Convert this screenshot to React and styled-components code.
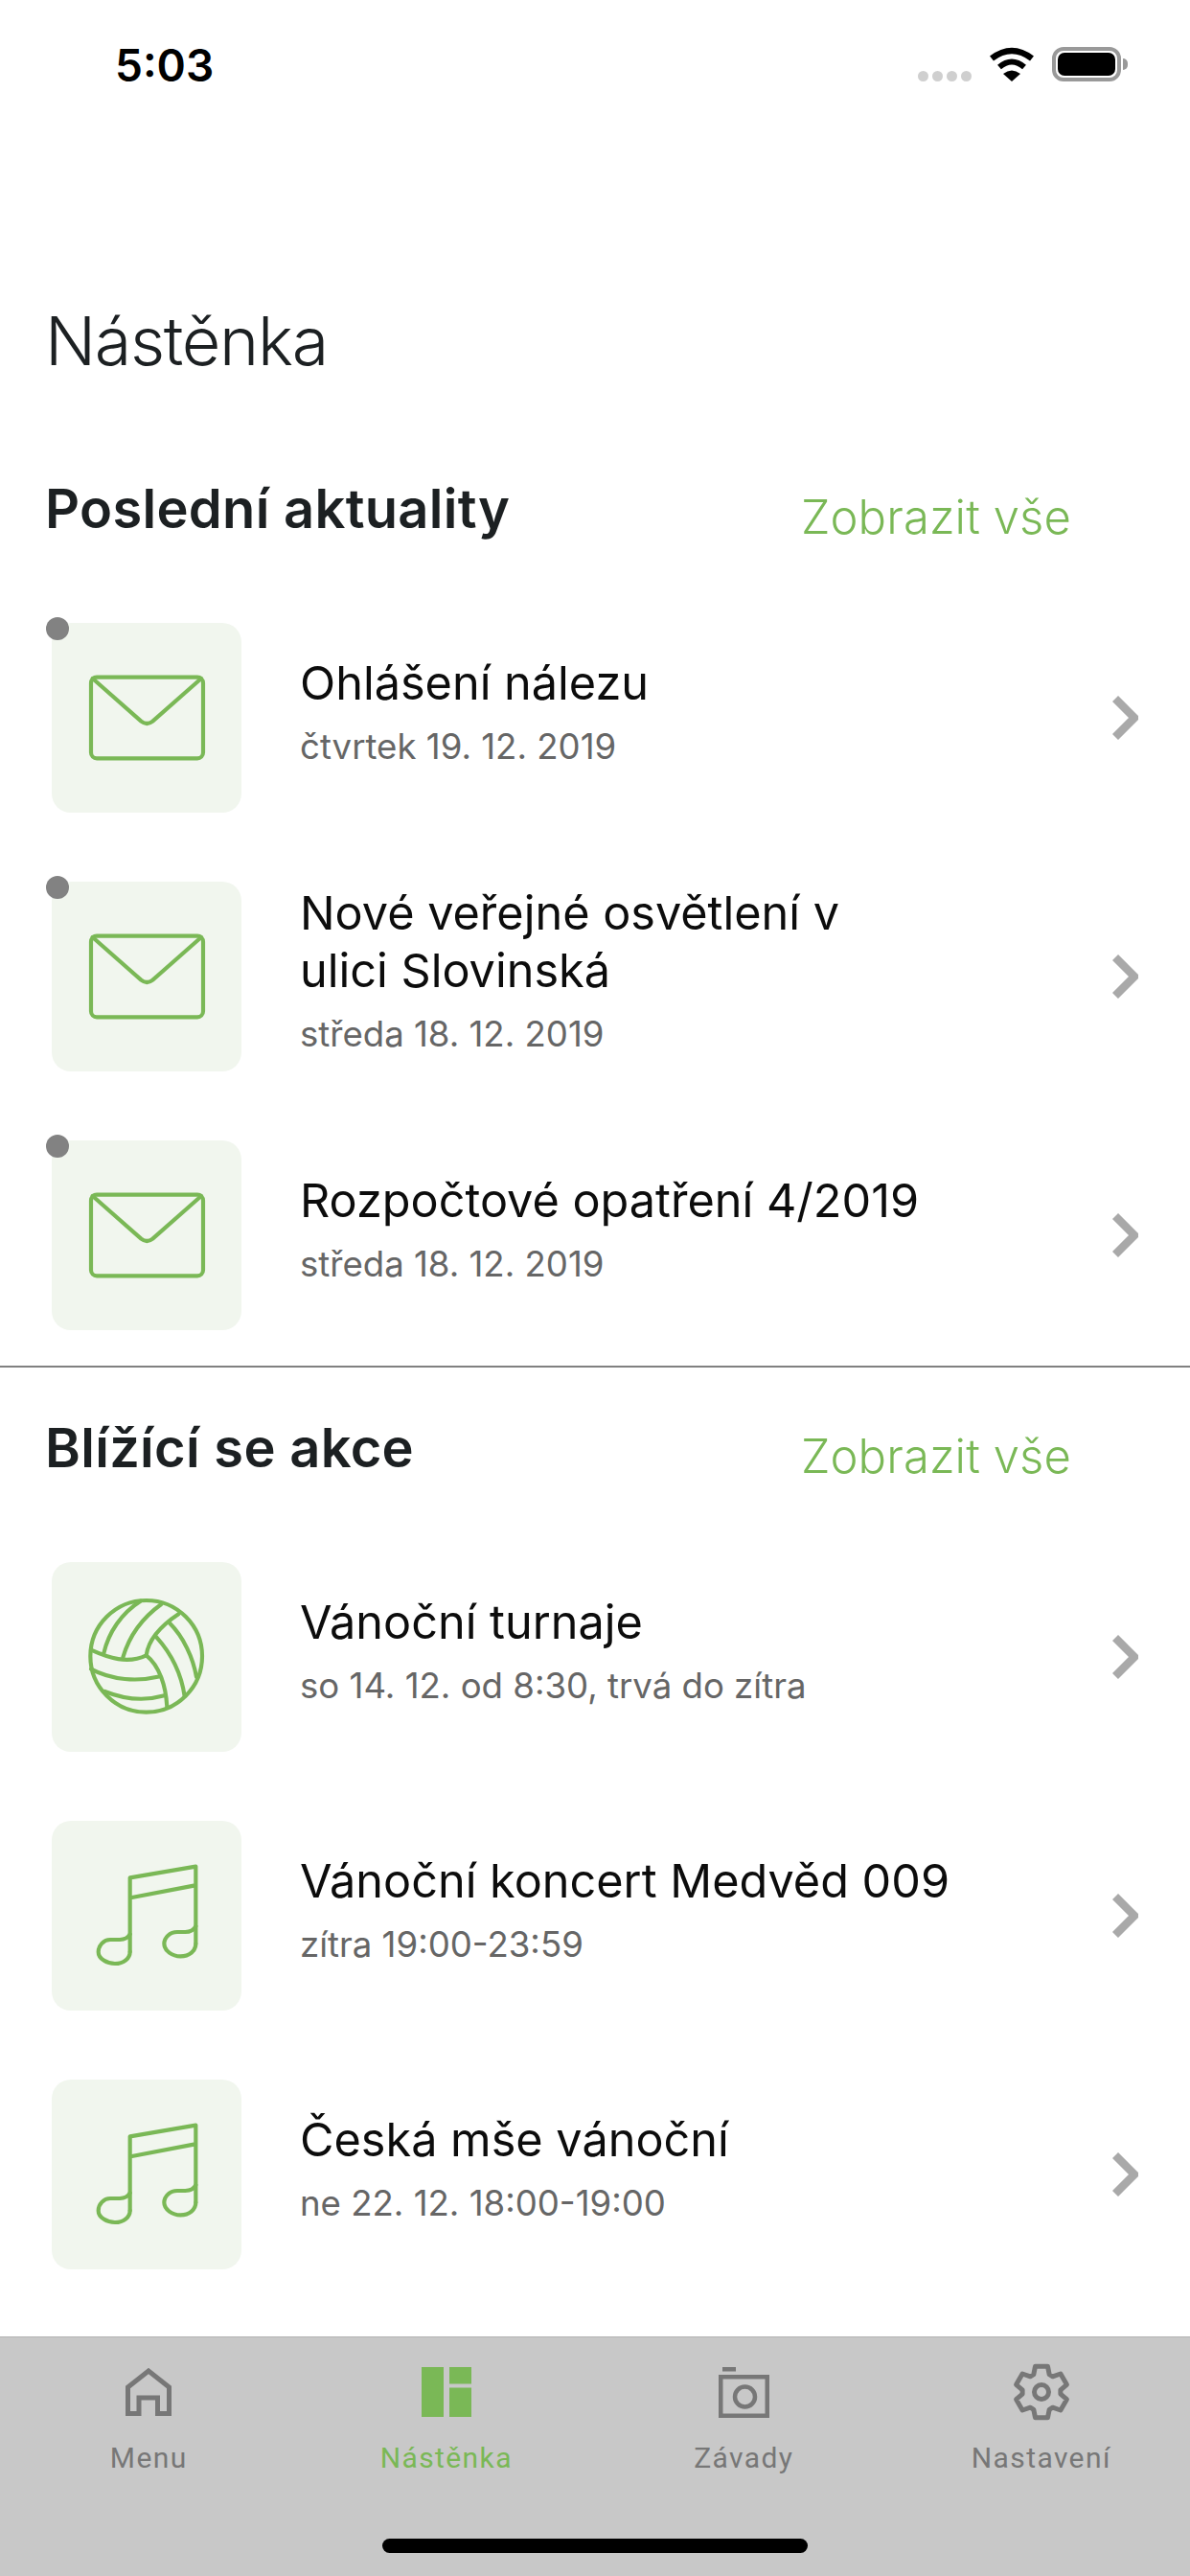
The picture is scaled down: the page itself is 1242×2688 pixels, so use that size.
import React from 'react';
import styled, { createGlobalStyle } from 'styled-components';

const GlobalStyle = createGlobalStyle`
    html, body {
        margin: 0;
        padding: 0;
        background: #fff;
    }
    * {
        box-sizing: border-box;
    }
`

const GREEN = '#7ab856'

const Page = styled.div`
    width: 1242px;
    height: 2688px;
    display: flex;
    flex-direction: column;
    font-family: Inter, "Liberation Sans", sans-serif;
    color: #1c2022;
    background: #fff;
    overflow: hidden;
`

const StatusBar = styled.div`
    height: 132px;
    padding: 49px 72px 0 120px;
    display: flex;
    justify-content: space-between;
    align-items: flex-start;
`

const Time = styled.div`
    font-size: 46px;
    line-height: 38px;
    font-weight: 600;
    color: #000;
`

const StatusIcons = styled.div`
    display: flex;
    align-items: flex-end;
    gap: 18px;
`

const SignalDots = styled.div`
    display: flex;
    gap: 4px;
`

const SignalDot = styled.span`
    width: 11px;
    height: 11px;
    border-radius: 50%;
    background: #cfcfcf;
`

const Battery = styled.div`
    position: relative;
    width: 72px;
    height: 36px;
    padding: 2px;
    border: 4px solid #999;
    border-radius: 12px;
    &::after {
        content: "";
        position: absolute;
        right: -11px;
        top: 8px;
        width: 5px;
        height: 12px;
        border-radius: 0 5px 5px 0;
        background: #999;
    }
`

const BatteryFill = styled.div`
    height: 100%;
    border-radius: 7px;
    background: #000;
`

const PageTitle = styled.h1`
    margin: 0;
    padding: 182px 0 0 47px;
    font-size: 70px;
    line-height: 84px;
    font-weight: 350;
    letter-spacing: -1.3px;
`

const Section = styled.section`
    padding: ${props => props.$first ? '98px 0 37px' : '49px 0 0'};
    border-top: ${props => props.$first ? 'none' : '2px solid #808080'};
`

const SectionHeader = styled.div`
    display: flex;
    justify-content: space-between;
    align-items: center;
    height: 70px;
    padding: 0 124px 0 47px;
`

const SectionTitle = styled.h2`
    margin: 0;
    font-size: 56px;
    line-height: 70px;
    font-weight: 600;
    letter-spacing: 0.3px;
`

const ShowAll = styled.a`
    position: relative;
    top: 9px;
    font-size: 49px;
    line-height: 60px;
    font-weight: 350;
    letter-spacing: 0.1px;
    color: ${GREEN};
`

const List = styled.div`
    margin-top: 84px;
    display: flex;
    flex-direction: column;
    gap: 72px;
`

const Row = styled.div`
    height: 198px;
    padding: 0 54px 0 54px;
    display: flex;
    align-items: center;
`

const Tile = styled.div`
    position: relative;
    flex: none;
    width: 198px;
    height: 198px;
    border-radius: 20px;
    background: #f1f6ee;
    svg {
        display: block;
    }
`

const UnreadDot = styled.span`
    position: absolute;
    left: -6px;
    top: -6px;
    width: 24px;
    height: 24px;
    border-radius: 50%;
    background: #828282;
`

const RowText = styled.div`
    flex: 1;
    margin-left: 61px;
    margin-top: -6px;
`

const RowTitle = styled.div`
    font-size: 48.6px;
    line-height: 60px;
    font-weight: 400;
    color: #0c0c0c;
`

const RowDate = styled.div`
    margin-top: 6px;
    font-size: 36.6px;
    line-height: 60px;
    font-weight: 400;
    color: #666;
`

const TabBar = styled.nav`
    flex: none;
    margin-top: auto;
    height: 250px;
    padding-top: 27px;
    display: flex;
    flex-direction: column;
    background: #c8c8c8;
    border-top: 1px solid #b2b2b2;
`

const Tabs = styled.div`
    display: grid;
    grid-template-columns: repeat(4, 1fr);
`

const Tab = styled.div`
    display: flex;
    flex-direction: column;
    align-items: center;
    color: ${props => props.$active ? GREEN : '#777'};
`

const TabIcon = styled.div`
    height: 60px;
    display: flex;
    align-items: center;
    justify-content: center;
`

const TabLabel = styled.div`
    margin-top: 20px;
    font-family: Roboto, Inter, sans-serif;
    font-size: 30px;
    line-height: 38px;
    letter-spacing: 1.4px;
`

const HomeIndicator = styled.div`
    width: 444px;
    height: 15px;
    margin: auto auto 24px;
    border-radius: 8px;
    background: #000;
`

const WifiIcon = () => (
    <svg width="48" height="36" viewBox="0 0 48 36">
        <path d="M3 12 Q24 -4 45 12" fill="none" stroke="#000" strokeWidth="6.5" />
        <path d="M11 21 Q24 10 37 21" fill="none" stroke="#000" strokeWidth="6" />
        <path d="M24 36 L15 28 Q24 21 33 28 Z" fill="#000" />
    </svg>
)

const Chevron = () => (
    <svg width="27" height="46" viewBox="0 0 27 46" style={{ flex: 'none' }}>
        <path d="M3 3 L23 23 L3 43" fill="none" stroke="#a9a9a9" strokeWidth="8.5" />
    </svg>
)

// icon drawings use the coordinates of a 3x crop of the tile
const TileSvg = ({ top, children }) => (
    <svg width="198" height="198" viewBox={`72 ${top} 594 594`} fill="none" stroke={GREEN} strokeWidth="12.5" strokeLinecap="round" strokeLinejoin="round">
        {children}
    </svg>
)

const EnvelopeIcon = () => (
    <TileSvg top={90}>
        <rect x="195" y="260" width="351" height="254" rx="18" />
        <path d="M200 264 L352 398 Q370 412 388 398 L540 264" />
    </TileSvg>
)

const BallIcon = () => (
    <TileSvg top={60}>
        <circle cx="368" cy="355" r="175" />
        <path d="M195 335 C250 360 310 380 368 352" />
        <path d="M368 352 C375 300 420 255 470 222" />
        <path d="M368 352 C410 385 430 450 433 515" />
        <path d="M235 345 C250 280 290 220 350 182" />
        <path d="M295 358 C315 290 355 235 415 192" />
        <path d="M400 295 C445 345 478 410 488 480" />
        <path d="M440 250 C485 295 515 360 525 420" />
        <path d="M195 395 C260 430 340 435 412 418" />
        <path d="M238 465 C300 490 365 495 425 478" />
    </TileSvg>
)

const MusicIcon = () => (
    <TileSvg top={60}>
        <path d="M317 470 V238 L523 203 V445" />
        <path d="M323 300 L517 263" />
        <path d="M317 415 C310 428 295 432 285 432 L255 432 C235 432 218 450 218 470 C218 492 245 507 270 507 C298 507 317 490 317 470" />
        <path d="M523 390 C515 405 500 408 490 408 L465 408 C442 408 424 425 424 445 C424 467 450 484 475 484 C503 484 523 467 523 445" />
    </TileSvg>
)

const HomeTabIcon = () => (
    <svg width="48" height="50" viewBox="0 0 48 50" fill="none" stroke="currentColor" strokeWidth="5">
        <path d="M2.5 47.5 V20 L24 3 L45.5 20 V47.5 H33.5 V31 H14 V47.5 Z" />
    </svg>
)

const BoardTabIcon = () => (
    <svg width="52" height="52" viewBox="0 0 52 52" fill="currentColor">
        <rect x="0" y="0" width="23" height="52" />
        <rect x="29" y="0" width="23" height="17.5" />
        <rect x="29" y="21.5" width="23" height="30.5" />
    </svg>
)

const CameraTabIcon = () => (
    <svg width="53" height="53" viewBox="0 0 53 53" fill="none" stroke="currentColor" strokeWidth="4.5">
        <rect x="4" y="0" width="14" height="4.5" fill="currentColor" stroke="none" />
        <rect x="2.25" y="10.25" width="48.5" height="40.5" />
        <circle cx="27.5" cy="31" r="10.5" />
    </svg>
)

// six toothed gear, points worked out around the centre
const gearPath = () => {
    const c = 30
    const points = []
    for (let i = 0; i < 6; i++) {
        const a = (i * Math.PI) / 3 - Math.PI / 2
        const at = (r, da) => `${(c + r * Math.cos(a + da)).toFixed(1)} ${(c + r * Math.sin(a + da)).toFixed(1)}`
        points.push(at(20, -0.42), at(27.5, -0.24), at(27.5, 0.24), at(20, 0.42))
    }
    return `M${points.join(' L')} Z`
}

const GearTabIcon = () => (
    <svg width="60" height="60" viewBox="0 0 60 60" fill="none" stroke="currentColor" strokeWidth="5" strokeLinejoin="round">
        <path d={gearPath()} />
        <circle cx="30" cy="30" r="7.5" />
    </svg>
)

const news = [
    { title: <>Ohlášení nálezu</>, date: 'čtvrtek 19. 12. 2019' },
    { title: <>Nové veřejné osvětlení v<br />ulici Slovinská</>, date: 'středa 18. 12. 2019' },
    { title: <>Rozpočtové opatření 4/2019</>, date: 'středa 18. 12. 2019' },
]

const events = [
    { title: 'Vánoční turnaje', date: 'so 14. 12. od 8:30, trvá do zítra', icon: <BallIcon /> },
    { title: 'Vánoční koncert Medvěd 009', date: 'zítra 19:00-23:59', icon: <MusicIcon /> },
    { title: 'Česká mše vánoční', date: 'ne 22. 12. 18:00-19:00', icon: <MusicIcon /> },
]

const tabs = [
    { label: 'Menu', icon: <HomeTabIcon /> },
    { label: 'Nástěnka', icon: <BoardTabIcon />, active: true },
    { label: 'Závady', icon: <CameraTabIcon /> },
    { label: 'Nastavení', icon: <GearTabIcon /> },
]

const ListRow = ({ title, date, icon, unread }) => (
    <Row>
        <Tile>
            {icon}
            {unread && <UnreadDot />}
        </Tile>
        <RowText>
            <RowTitle>{title}</RowTitle>
            <RowDate>{date}</RowDate>
        </RowText>
        <Chevron />
    </Row>
)

export default function App() {
    return (
        <Page>
            <GlobalStyle />
            <StatusBar>
                <Time>5:03</Time>
                <StatusIcons>
                    <SignalDots>
                        <SignalDot /><SignalDot /><SignalDot /><SignalDot />
                    </SignalDots>
                    <WifiIcon />
                    <Battery><BatteryFill /></Battery>
                </StatusIcons>
            </StatusBar>
            <PageTitle>Nástěnka</PageTitle>
            <Section $first>
                <SectionHeader>
                    <SectionTitle>Poslední aktuality</SectionTitle>
                    <ShowAll>Zobrazit vše</ShowAll>
                </SectionHeader>
                <List>
                    {news.map((item, i) => (
                        <ListRow key={i} {...item} icon={<EnvelopeIcon />} unread />
                    ))}
                </List>
            </Section>
            <Section>
                <SectionHeader>
                    <SectionTitle>Blížící se akce</SectionTitle>
                    <ShowAll>Zobrazit vše</ShowAll>
                </SectionHeader>
                <List>
                    {events.map((item, i) => (
                        <ListRow key={i} {...item} />
                    ))}
                </List>
            </Section>
            <TabBar>
                <Tabs>
                    {tabs.map(tab => (
                        <Tab key={tab.label} $active={tab.active}>
                            <TabIcon>{tab.icon}</TabIcon>
                            <TabLabel>{tab.label}</TabLabel>
                        </Tab>
                    ))}
                </Tabs>
                <HomeIndicator />
            </TabBar>
        </Page>
    )
}
